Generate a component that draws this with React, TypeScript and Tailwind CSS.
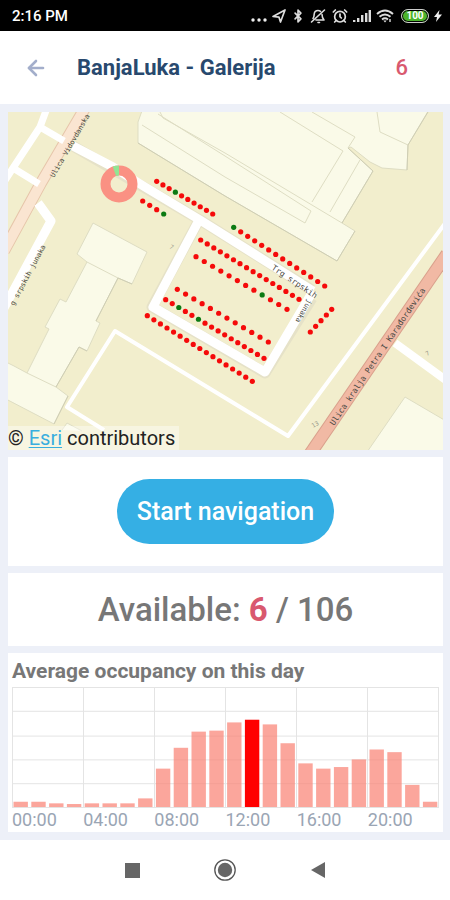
import React from "react";
import { AlarmClock, ArrowLeft, BellOff, Bluetooth } from "lucide-react";

type Row = {
  from: [number, number];
  to: [number, number];
  count: number;
  free?: number[];
};

const parkingRows: Row[] = [
  { from: [156.7, 181.3], to: [212.7, 214], count: 10, free: [3] },
  { from: [142.7, 201], to: [163.7, 214], count: 4, free: [3] },
  { from: [233.7, 227.3], to: [324.7, 286], count: 14, free: [0] },
  { from: [200.7, 240], to: [299, 299.3], count: 16 },
  { from: [196, 256.7], to: [287, 309.3], count: 12, free: [8] },
  { from: [177.3, 289.3], to: [268.3, 342], count: 12 },
  { from: [165.7, 299.7], to: [264, 358.3], count: 16, free: [2, 5] },
  { from: [147.3, 315.7], to: [252.3, 381.3], count: 17 },
  { from: [310.3, 332], to: [331.7, 309.3], count: 5 },
];

const occupancy = [
  5.3, 5.3, 3.7, 3, 3.7, 3.7, 3.7, 8.7, 38.7, 59.7, 76, 77, 85.3, 88, 83.3,
  64.3, 44, 38.7, 40.3, 48, 58, 55.3, 22.3, 5.3,
];
const currentHour = 13;
const hourLabels = ["00:00", "04:00", "08:00", "12:00", "16:00", "20:00"];

function StatusBar() {
  return (
    <div className="flex h-[31px] items-center justify-between bg-black pl-3 pr-2 text-white">
      <span className="text-[15px] font-medium leading-5">2:16 PM</span>
      <div className="flex items-center gap-[5px]">
        <svg className="mt-2 h-1 w-4" viewBox="0 0 16 4" fill="#eee">
          <circle cx="2" cy="2" r="1.7" />
          <circle cx="8" cy="2" r="1.7" />
          <circle cx="14" cy="2" r="1.7" />
        </svg>
        <svg className="h-[14px] w-[14px]" viewBox="0 0 14 14" fill="none" stroke="#ddd" strokeWidth="1.7" strokeLinejoin="round">
          <path d="M1 7.5 13 1 8.5 13 7 8.2Z" />
        </svg>
        <Bluetooth className="h-4 w-[14px]" color="#ddd" strokeWidth={2.8} />
        <svg className="h-4 w-4" viewBox="0 0 16 16" fill="none" stroke="#ddd" strokeWidth="1.6" strokeLinecap="round" strokeLinejoin="round">
          <path d="M1.5 14 14.5 2M3 10.5C4.3 9 4 7.500 4.200 6 4.500 3.800 6 2.500 8 2.500 9 2.500 9.800 2.800 10.500 3.300M12 6.500C12.100 9 12.500 10.500 14 12H6M8 14.500h1.500" />
        </svg>
        <AlarmClock className="ml-px h-4 w-4" color="#ddd" strokeWidth={2.6} />
        <svg className="h-3 w-[18px]" viewBox="0 0 18 12" fill="#ddd">
          <rect x="0" y="10" width="2.4" height="2" />
          <rect x="4" y="8" width="2.4" height="4" />
          <rect x="8" y="5" width="2.4" height="7" />
          <rect x="12" y="3" width="2.4" height="9" />
          <rect x="15.6" y="0" width="2.4" height="12" />
        </svg>
        <svg className="h-[14px] w-[18px]" viewBox="0 0 18 14" fill="none" stroke="#ddd" strokeWidth="1.9">
          <path d="M1 5Q9-2 17 5M3.5 7.8Q9 3 14.5 7.8M6 10.4Q9 8 12 10.4" />
          <path d="M7.3 11.5h3.4L9 13.5Z" fill="#ddd" stroke="none" />
          <path d="M14 10v3" strokeWidth="1.4" />
        </svg>
        <span className="ml-[2px] flex h-[14px] w-7 items-center justify-center rounded-full border border-[#ccc] bg-[#4cb52b] text-[10px] font-bold leading-3 ring-1 ring-inset ring-black">
          100
        </span>
        <svg className="h-3 w-2" viewBox="0 0 8 12" fill="#eee">
          <path d="M5.5 0 0 7h3L2 12l6-7.5H4.6Z" />
        </svg>
      </div>
    </div>
  );
}

function ParkingMap() {
  return (
    <div className="relative">
      <svg
        className="block h-[338px] w-full"
        viewBox="8 112 435 338"
        preserveAspectRatio="xMidYMid slice"
        role="img"
        aria-label="Parking map"
      >
        <rect x="0" y="100" width="460" height="360" fill="#f2eecd" />

        <g fill="#fafae8" stroke="#deddc3" strokeWidth="1">
          <path d="M93 223 147 252 132 284 118 278 96 321 100 323 87 351 79 347 56 387 68 396 54 424 4 398V361L14 366 27 373 49 329 45 327 60 299 66 302 87 262 77 254Z" />
          <path d="M143 108 138 122V143L225 196 337 261 355 231 342 223 373 171 348 148 351 147 370 162 382 168 407 170 408 145 430 108Z" />
          <path d="M405 397 446 421V455H365Z" />
          <path d="M62 430 67 423 82 431" />
          <path
            d="M87 262 118 278M27 373 56 387M280 112 343 151 312 202M312 112 355 137 348 148M360 160 330 212M160 112 163 118 225 153 342 223M158 114 225 156 311 211 305 223 225 177 142 125M377 112 380 132 408 145"
            fill="none"
          />
        </g>
        <path d="M138 143 225 196 337 261 355 231M342 223 373 171 348 148M407 170 408 145 428 112M132 284 118 278 96 321M87 351 79 347 56 387M68 396 54 424" fill="none" stroke="#cfceb4" strokeWidth="1" />

        <path d="M85 108 41 183 4 251" fill="none" stroke="#e6c5aa" strokeWidth="12" />
        <path d="M85 108 41 183 4 251" fill="none" stroke="#fae5d1" strokeWidth="10" />

        <g fill="none" stroke="#e6e2c8" strokeLinejoin="round">
          <path d="M198 222 152 307 265 373 312 298" strokeWidth="11" />
          <path d="M73 146 200 220 312 290" strokeWidth="11" />
        </g>
        <g fill="none" stroke="#fff" strokeLinejoin="round">
          <path d="M47 108 40 127 13 168 4 182" strokeWidth="7" />
          <path d="M40 127 64 141" strokeWidth="7" />
          <path d="M13 168 39 184" strokeWidth="7" />
          <path d="M73 146 113 167 145 187 200 220 313 291" strokeWidth="9" />
          <path d="M198 222 153 307 265 372 313 291" strokeWidth="9" />
          <path d="M38 203 51 221 4 308" strokeWidth="9" />
          <path d="M446 222 288 436 115 331 67 407 104 430" strokeWidth="4" />
          <path d="M395 343 447 381" strokeWidth="8" />
        </g>
        <path d="M447 254 310 454" fill="none" stroke="#d9a08c" strokeWidth="13" />
        <path d="M447 254 310 454" fill="none" stroke="#f1b9a4" strokeWidth="11" />

        <g fontFamily="'DejaVu Sans Mono', monospace" fontSize="8" fill="#4a4a44">
          <text transform="translate(54 178) rotate(-60)" fontSize="7">Ulica Vidovdanska</text>
          <text transform="translate(14 306) rotate(-62)" fontSize="7">g srpskih junaka</text>
          <text transform="translate(271 269) rotate(34)">Trg srpskih</text>
          <text transform="translate(308 299) rotate(120)" fontSize="7">junaka</text>
          <text transform="translate(334 426) rotate(-56)">
            Ulica kralja Petra I Karađorđevića
          </text>
          <g fill="#99998a" fontSize="6">
            <text transform="translate(169 248) rotate(30)">7</text>
            <text transform="translate(427 356) rotate(-30)">7</text>
            <text transform="translate(313 428) rotate(-30)">13</text>
          </g>
        </g>

        {parkingRows.map((row, r) =>
          Array.from({ length: row.count }, (_, i) => {
            const t = i / (row.count - 1);
            return (
              <circle
                key={`${r}-${i}`}
                cx={row.from[0] + (row.to[0] - row.from[0]) * t}
                cy={row.from[1] + (row.to[1] - row.from[1]) * t}
                r="2.6"
                fill={row.free?.includes(i) ? "#0b7a12" : "#f50a0a"}
              />
            );
          })
        )}

        <g fill="none" strokeWidth="10">
          <circle cx="119" cy="184" r="13.5" stroke="#fa9183" />
          <circle
            cx="119"
            cy="184"
            r="13.5"
            stroke="#92e593"
            pathLength="360"
            strokeDasharray="20 340"
            transform="rotate(-110 119 184)"
          />
        </g>
      </svg>
      <p className="absolute bottom-0 left-0 bg-white/40 pr-1 text-xl leading-6 text-[#222]">
        ©{" "}
        <a href="#esri" className="text-[#39aede] underline decoration-1 underline-offset-2">
          Esri
        </a>{" "}
        contributors
      </p>
    </div>
  );
}

function OccupancyChart() {
  return (
    <section className="bg-white px-1 pt-1">
      <h2 className="text-[21px] font-bold leading-7 text-[#777]">
        Average occupancy on this day
      </h2>
      <svg
        className="mt-[2px] block h-[121px] w-full"
        viewBox="0 0 427 122"
        preserveAspectRatio="none"
        role="img"
        aria-label="Average occupancy by hour"
      >
        <g stroke="#e4e4e4" strokeWidth="1">
          {[0.5, 24.5, 49.5, 73.5, 97.5, 121.5].map((y) => (
            <path key={y} d={`M0 ${y}H427`} />
          ))}
          {[0.5, 71.5, 142.5, 213.5, 284.5, 355.5, 426.5].map((x) => (
            <path key={x} d={`M${x} 0V122`} />
          ))}
        </g>
        {occupancy.map((value, hour) => (
          <rect
            key={hour}
            x={1.5 + hour * 17.8}
            y={121 - value}
            width="14.4"
            height={value}
            fill={hour === currentHour ? "#ff0000" : "#fa8072"}
            fillOpacity={hour === currentHour ? 1 : 0.7}
          />
        ))}
      </svg>
      <div className="grid grid-cols-6 text-lg leading-6 text-[#9aa5b4]">
        {hourLabels.map((label) => (
          <span key={label}>{label}</span>
        ))}
      </div>
    </section>
  );
}

export default function App() {
  return (
    <div className="flex min-h-screen flex-col bg-[#edf0f8] font-[Roboto,sans-serif]">
      <StatusBar />
      <header className="flex h-[73px] items-center bg-white pl-6 pr-[42px]">
        <button type="button" aria-label="Back" className="flex w-[53px] items-center">
          <ArrowLeft className="h-6 w-6" color="#a3aecb" strokeWidth={2.6} />
        </button>
        <h1 className="text-[22px] font-bold leading-7 text-[#28496e]">
          BanjaLuka - Galerija
        </h1>
        <span className="ml-auto text-[22px] font-medium leading-7 text-[#d9596f]">6</span>
      </header>

      <main className="flex flex-1 flex-col gap-[7px] pb-2 pl-2 pr-[7px] pt-2">
        <ParkingMap />
        <section className="flex justify-center bg-white py-[22px]">
          <button
            type="button"
            className="h-[65px] rounded-full bg-[#35afe4] px-5 text-[25px] font-medium text-white"
          >
            Start navigation
          </button>
        </section>
        <section className="bg-white py-4 text-center text-[33px] font-medium leading-[41px] text-[#777]">
          Available: <span className="font-bold text-[#d9596f]">6</span> / 106
        </section>
        <OccupancyChart />
      </main>

      <nav className="flex h-[60px] items-center justify-center gap-[53px] bg-white">
        <button type="button" aria-label="Recent apps" className="flex h-10 w-10 items-center justify-center">
          <span className="h-[15px] w-[15px] bg-[#666]" />
        </button>
        <button type="button" aria-label="Home" className="flex h-10 w-10 items-center justify-center">
          <svg className="h-[22px] w-[22px]" viewBox="0 0 22 22">
            <circle cx="11" cy="11" r="10.2" fill="none" stroke="#555" strokeWidth="1.3" />
            <circle cx="11" cy="11" r="7.2" fill="#666" />
          </svg>
        </button>
        <button type="button" aria-label="Back to previous screen" className="flex h-10 w-10 items-center justify-center">
          <svg className="h-4 w-[14px]" viewBox="0 0 14 16" fill="#666">
            <path d="M14 0v16L0 8Z" />
          </svg>
        </button>
      </nav>
    </div>
  );
}
